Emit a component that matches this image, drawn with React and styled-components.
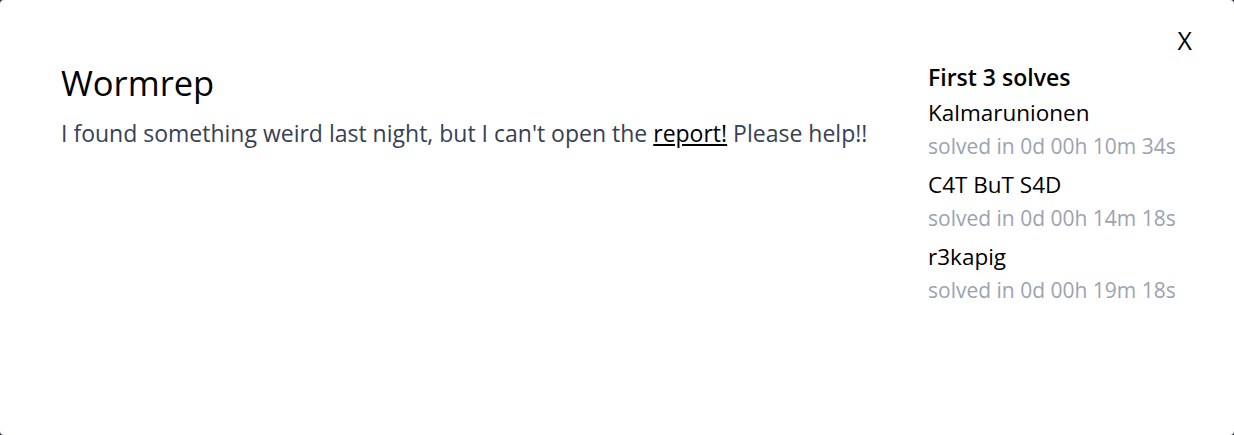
import React from "react";
import styled, { createGlobalStyle } from "styled-components";

const GlobalStyle = createGlobalStyle`
  html, body {
    margin: 0;
    padding: 0;
    background: #2b2f36;
  }
  body {
    font-family: "Open Sans", Lato, sans-serif;
  }
`;

const Modal = styled.div`
  position: relative;
  box-sizing: border-box;
  width: 1234px;
  height: 435px;
  background: #ffffff;
  border-radius: 4px;
  display: flex;
  padding: 60px 40px 0 61px;
`;

const CloseButton = styled.button`
  position: absolute;
  top: 23px;
  right: 42px;
  border: none;
  background: none;
  padding: 0;
  font-family: inherit;
  font-size: 25px;
  color: #000;
  cursor: pointer;
`;

const Main = styled.div`
  flex: 1;
`;

const Title = styled.h2`
  margin: 0 0 11px;
  font-size: 34.5px;
  font-weight: 400;
  color: #000;
  line-height: 46px;
`;

const Description = styled.p`
  margin: 0;
  font-size: 23px;
  line-height: 32px;
  color: #374151;

  a {
    color: #000;
    text-decoration: underline;
  }
`;

const Solves = styled.aside`
  width: 266px;
  display: flex;
  flex-direction: column;
`;

const SolvesTitle = styled.h3`
  margin: 0 0 1px;
  font-size: 23px;
  font-weight: 600;
  color: #000;
  line-height: 34px;
`;

const Team = styled.div`
  font-size: 22.5px;
  color: #000;
  line-height: 36px;
`;

const SolveTime = styled.div`
  font-size: 21px;
  color: #9ca3af;
  line-height: 30px;
  margin-bottom: 6px;
`;

const solves = [
  { team: "Kalmarunionen", time: "0d 00h 10m 34s" },
  { team: "C4T BuT S4D", time: "0d 00h 14m 18s" },
  { team: "r3kapig", time: "0d 00h 19m 18s" },
];

export default function App() {
  return (
    <>
      <GlobalStyle />
      <Modal>
        <CloseButton>X</CloseButton>
        <Main>
          <Title>Wormrep</Title>
          <Description>
            I found something weird last night, but I can't open the{" "}
            <a href="#">report!</a> Please help!!
          </Description>
        </Main>
        <Solves>
          <SolvesTitle>First 3 solves</SolvesTitle>
          {solves.map((s) => (
            <React.Fragment key={s.team}>
              <Team>{s.team}</Team>
              <SolveTime>solved in {s.time}</SolveTime>
            </React.Fragment>
          ))}
        </Solves>
      </Modal>
    </>
  );
}
